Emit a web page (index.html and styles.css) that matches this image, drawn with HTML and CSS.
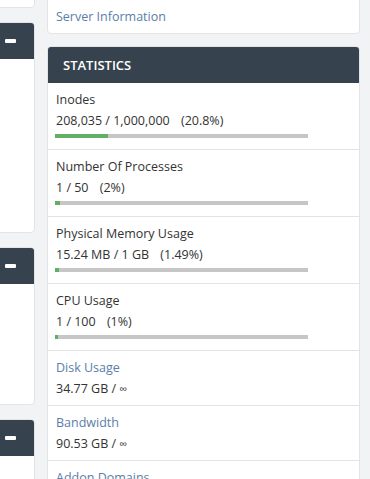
FILE: index.html
```html
<!DOCTYPE html>
<html lang="en">
<head>
    <meta charset="UTF-8">
    <meta name="viewport" content="width=device-width, initial-scale=1.0">
    <title>Statistics</title>
    <link rel="stylesheet" href="styles.css">
</head>
<body>
    <div class="page">
        <aside class="side">
            <div class="card side-top"></div>
            <div class="panel">
                <div class="panel-head side-head"><span class="toggle"></span></div>
                <div class="panel-body body-lg"></div>
            </div>
            <div class="panel">
                <div class="panel-head side-head"><span class="toggle"></span></div>
                <div class="panel-body body-md"></div>
            </div>
            <div class="panel">
                <div class="panel-head side-head"><span class="toggle"></span></div>
                <div class="panel-body body-sm"></div>
            </div>
        </aside>
        <main class="main">
            <div class="card info-card">
                <a href="#" class="link">Server Information</a>
            </div>
            <div class="panel stats">
                <div class="panel-head">
                    <h2>Statistics</h2>
                </div>
                <div class="stat">
                    <div class="stat-label">Inodes</div>
                    <div class="stat-value">208,035 / 1,000,000 <span class="pct">(20.8%)</span></div>
                    <div class="bar"><div class="bar-fill" style="width: 20.8%"></div></div>
                </div>
                <div class="stat">
                    <div class="stat-label">Number Of Processes</div>
                    <div class="stat-value">1 / 50 <span class="pct">(2%)</span></div>
                    <div class="bar"><div class="bar-fill" style="width: 2%"></div></div>
                </div>
                <div class="stat">
                    <div class="stat-label">Physical Memory Usage</div>
                    <div class="stat-value">15.24 MB / 1 GB <span class="pct">(1.49%)</span></div>
                    <div class="bar"><div class="bar-fill" style="width: 1.49%"></div></div>
                </div>
                <div class="stat">
                    <div class="stat-label">CPU Usage</div>
                    <div class="stat-value">1 / 100 <span class="pct">(1%)</span></div>
                    <div class="bar"><div class="bar-fill" style="width: 1%"></div></div>
                </div>
                <div class="stat">
                    <a href="#" class="link stat-label">Disk Usage</a>
                    <div class="stat-value">34.77 GB / <span class="inf">∞</span></div>
                </div>
                <div class="stat">
                    <a href="#" class="link stat-label">Bandwidth</a>
                    <div class="stat-value">90.53 GB / <span class="inf">∞</span></div>
                </div>
                <div class="stat">
                    <a href="#" class="link stat-label">Addon Domains</a>
                    <div class="stat-value">0 / 0</div>
                </div>
            </div>
        </main>
    </div>
</body>
</html>
```

FILE: styles.css
```css
body {
    font-family: 'Open Sans', 'Liberation Sans', sans-serif;
    font-size: 12.5px;
    margin: 0;
    background: #f2f3f4;
    color: #333;
    overflow: hidden;
}
.page {
    display: flex;
    gap: 12px;
    margin: -11px 10px 0 -20px;
}
.side {
    width: 55px;
    display: flex;
    flex-direction: column;
    gap: 14px;
}
.main {
    flex: 1;
    display: flex;
    flex-direction: column;
    gap: 12px;
}
.card,
.panel {
    background: #fff;
    border: 1px solid #e2e4e6;
    border-radius: 4px;
}
.side-top {
    height: 17px;
}
.panel {
    overflow: hidden;
}
.panel-head {
    background: #36434f;
    color: #fff;
    height: 36px;
    display: flex;
    align-items: center;
}
.side-head {
    justify-content: flex-end;
    padding-right: 18px;
}
.toggle {
    display: block;
    width: 11px;
    height: 4px;
    background: #fff;
    border-radius: 1px;
}
.body-lg {
    height: 173px;
}
.body-md {
    height: 120px;
}
.body-sm {
    height: 60px;
}
.info-card {
    padding: 16px 8px 6px;
}
.link {
    display: block;
    color: #5a7ea8;
    text-decoration: none;
    line-height: 21px;
}
.panel-head h2 {
    margin: 0;
    padding-left: 15px;
    font-size: 13px;
    font-weight: 600;
    text-transform: uppercase;
}
.stat {
    padding: 6px 8px;
    border-top: 1px solid #e3e3e3;
}
.panel-head + .stat {
    border-top: none;
}
.stat-label,
.stat-value {
    line-height: 21px;
}
.pct {
    margin-left: 8px;
}
.inf {
    font-size: 11px;
}
.bar {
    width: 253px;
    height: 4px;
    margin: 3px 0 5px -1px;
    background: #c6c6c6;
}
.bar-fill {
    height: 100%;
    background: #62ae62;
}
```
